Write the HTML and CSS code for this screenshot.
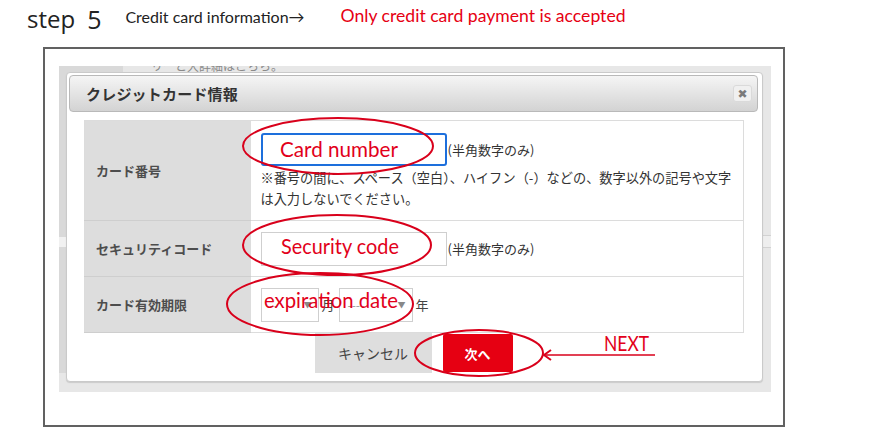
FILE: index.html
```html
<!DOCTYPE html>
<html lang="ja">
<head>
<meta charset="utf-8">
<title>step 5</title>
<link rel="stylesheet" href="styles.css">
</head>
<body>
<div class="page">
  <div class="title">
    <span class="step">step</span><span class="num">5</span>
    <span class="sub">Credit card information→</span>
    <span class="red-note">Only credit card payment is accepted</span>
  </div>
  <div class="frame">
    <div class="shot">
      <div class="bg-left"><div class="bg-band"></div></div>
      <div class="bg-text">リーと大詳細はこちら。</div>
      <div class="bg-right"></div>
      <div class="dialog">
        <div class="dlg-head">
          <span class="dlg-title">クレジットカード情報</span>
          <span class="close">✖</span>
        </div>
        <table class="form">
          <tr class="row-card">
            <th>カード番号</th>
            <td>
              <div class="field">
                <span class="inp inp-focus"></span><span class="hint">(半角数字のみ)</span>
              </div>
              <p class="note">※番号の間に、スペース（空白）、ハイフン（-）などの、数字以外の記号や文字<br>は入力しないでください。</p>
            </td>
          </tr>
          <tr class="row-sec">
            <th>セキュリティコード</th>
            <td>
              <div class="field">
                <span class="inp inp-sec"></span><span class="hint">(半角数字のみ)</span>
              </div>
            </td>
          </tr>
          <tr class="row-exp">
            <th>カード有効期限</th>
            <td>
              <div class="field">
                <span class="sel sel-m"><span class="dash">--</span><span class="arr">▼</span></span><span class="unit">月</span><span class="sel sel-y"><span class="dash">----</span><span class="arr">▼</span></span><span class="unit">年</span>
              </div>
            </td>
          </tr>
        </table>
        <div class="actions">
          <button class="btn btn-cancel">キャンセル</button>
          <button class="btn btn-next">次へ</button>
        </div>
      </div>
    </div>
  </div>
  <svg class="marks" width="870" height="439" viewBox="0 0 870 439">
    <g class="ring">
      <ellipse cx="338" cy="146" rx="95" ry="28"/>
      <ellipse cx="337" cy="245" rx="94" ry="30"/>
      <ellipse cx="320" cy="304" rx="93" ry="31"/>
      <ellipse cx="479" cy="353" rx="64" ry="23"/>
      <line x1="544" y1="355" x2="655" y2="355"/>
      <polyline points="551,350 544,355 551,360"/>
    </g>
    <g class="lbl">
      <text x="280" y="157" textLength="118" lengthAdjust="spacingAndGlyphs">Card number</text>
      <text x="281" y="254" textLength="118" lengthAdjust="spacingAndGlyphs">Security code</text>
      <text x="264" y="308" textLength="134" lengthAdjust="spacingAndGlyphs">expiration date</text>
      <text class="next" x="604" y="351" textLength="45" lengthAdjust="spacingAndGlyphs">NEXT</text>
    </g>
  </svg>
</div>
</body>
</html>
```

FILE: styles.css
```css
* { box-sizing: border-box; }
html, body { margin: 0; padding: 0; background: #fff; }
.page {
  position: relative;
  width: 870px;
  height: 439px;
  overflow: hidden;
  font-family: "Noto Sans CJK JP", sans-serif;
}

/* title row */
.title {
  display: flex;
  align-items: flex-start;
  height: 47px;
  padding: 3px 0 0 27px;
  white-space: nowrap;
}
.step, .num {
  font-family: "Open Sans", sans-serif;
  font-size: 24px;
  line-height: 32px;
  color: #222;
}
.num { margin-left: 12px; font-size: 25px; }
.sub {
  font-family: Lato, sans-serif;
  font-size: 16px;
  line-height: 20px;
  color: #222;
  margin: 4px 0 0 24px;
}
.red-note {
  font-family: Lato, sans-serif;
  font-size: 17.6px;
  line-height: 20px;
  color: #e60012;
  margin: 3px 0 0 36px;
}

/* framed screenshot */
.frame {
  margin-left: 43px;
  width: 742px;
  height: 380px;
  border: 2px solid #616161;
  padding: 17px 0 0 14px;
}
.shot {
  position: relative;
  width: 712px;
  height: 326px;
  background: #e7e7e7;
  padding: 6px 8px 10px 7px;
  overflow: hidden;
}
.bg-left {
  position: absolute;
  left: 0;
  top: 0;
  width: 64px;
  height: 307px;
  background: #d9d9d9;
}
.bg-band {
  margin-top: 171px;
  height: 10px;
  background: #f1f1f1;
}
.bg-text {
  position: absolute;
  left: 92px;
  top: -6px;
  font-size: 12px;
  line-height: 12px;
  color: #8a8a8a;
}
.bg-right {
  position: absolute;
  right: 0;
  top: 169px;
  width: 10px;
  height: 13px;
  border-top: 1px solid #d2d2d2;
  border-bottom: 1px solid #d2d2d2;
  background: #eeeeee;
}

/* dialog */
.dialog {
  position: relative;
  z-index: 1;
  width: 697px;
  height: 310px;
  background: #fff;
  border: 1px solid #cacaca;
  border-radius: 4px;
  box-shadow: 0 1px 1px rgba(0,0,0,0.12);
  padding: 2px 4px 0 2px;
}
.dlg-head {
  display: flex;
  align-items: center;
  justify-content: space-between;
  height: 37px;
  border: 1px solid #b9b9b9;
  border-radius: 4px;
  background: linear-gradient(#f5f5f5, #d3d3d3);
  padding: 0 5px 0 16px;
}
.dlg-title {
  font-size: 15px;
  font-weight: bold;
  color: #333;
  letter-spacing: 0.2px;
}
.close {
  display: flex;
  align-items: center;
  justify-content: center;
  width: 19px;
  height: 17px;
  background: #f0f0f0;
  border: 1px solid #dadada;
  border-radius: 3px;
  font-family: "DejaVu Sans", sans-serif;
  font-size: 12px;
  font-weight: bold;
  color: #7a7a7a;
}

/* form table */
.form {
  margin: 8px 0 0 15px;
  width: 660px;
  border-collapse: collapse;
  border: 1px solid #dcdcdc;
}
.form th {
  width: 166px;
  background: #dddddd;
  text-align: left;
  padding: 0 0 0 11px;
  font-size: 13px;
  font-weight: bold;
  color: #4d4d4d;
  border-bottom: 1px solid #cecece;
}
.form td {
  padding: 0 0 0 10px;
  border-bottom: 1px solid #dcdcdc;
  vertical-align: middle;
}
.row-card th, .row-card td { height: 100px; }
.row-card td { vertical-align: top; padding-top: 12px; }
.row-sec th, .row-sec td { height: 56px; }
.row-exp th, .row-exp td { height: 56px; }

.field {
  display: flex;
  align-items: center;
}
.inp {
  display: block;
  width: 186px;
  height: 34px;
  border: 1px solid #cfcfcf;
  background: #fff;
}
.inp-focus {
  height: 33px;
  border: 2px solid #1d6fdc;
  border-radius: 3px;
}
.hint {
  margin-left: 1px;
  font-size: 13px;
  color: #333;
}
.note {
  margin: 1px 0 0;
  font-size: 13.2px;
  line-height: 21px;
  color: #333;
  white-space: nowrap;
}
.sel {
  display: flex;
  align-items: center;
  justify-content: space-between;
  height: 34px;
  border: 1px solid #cfcfcf;
  background: #fff;
  padding: 0 6px 0 8px;
  color: #999;
  font-size: 12px;
}
.sel-m { width: 58px; }
.sel-y { width: 74px; }
.arr { font-size: 8px; color: #888; }
.unit {
  font-size: 13px;
  color: #444;
  margin: 0 4px 0 3px;
}

/* buttons */
.actions {
  display: flex;
  justify-content: center;
  align-items: center;
  gap: 11px;
}
.btn {
  border: none;
  font-family: "Noto Sans CJK JP", sans-serif;
  padding: 0;
}
.btn-cancel {
  width: 117px;
  height: 40px;
  background: #dedede;
  color: #444;
  font-size: 14px;
}
.btn-next {
  width: 70px;
  height: 38px;
  background: #e60012;
  color: #fff;
  font-size: 13px;
  font-weight: bold;
  border-radius: 2px;
}

/* red annotations */
.marks {
  position: absolute;
  left: 0;
  top: 0;
  z-index: 5;
  pointer-events: none;
}
.ring ellipse, .ring line, .ring polyline {
  fill: none;
  stroke: #d9001b;
  stroke-width: 2;
}
.ring line { stroke-width: 1.3; }
.lbl text {
  font-family: Lato, sans-serif;
  font-size: 21px;
  fill: #e2001a;
}
.lbl .next { font-size: 22px; }
```
